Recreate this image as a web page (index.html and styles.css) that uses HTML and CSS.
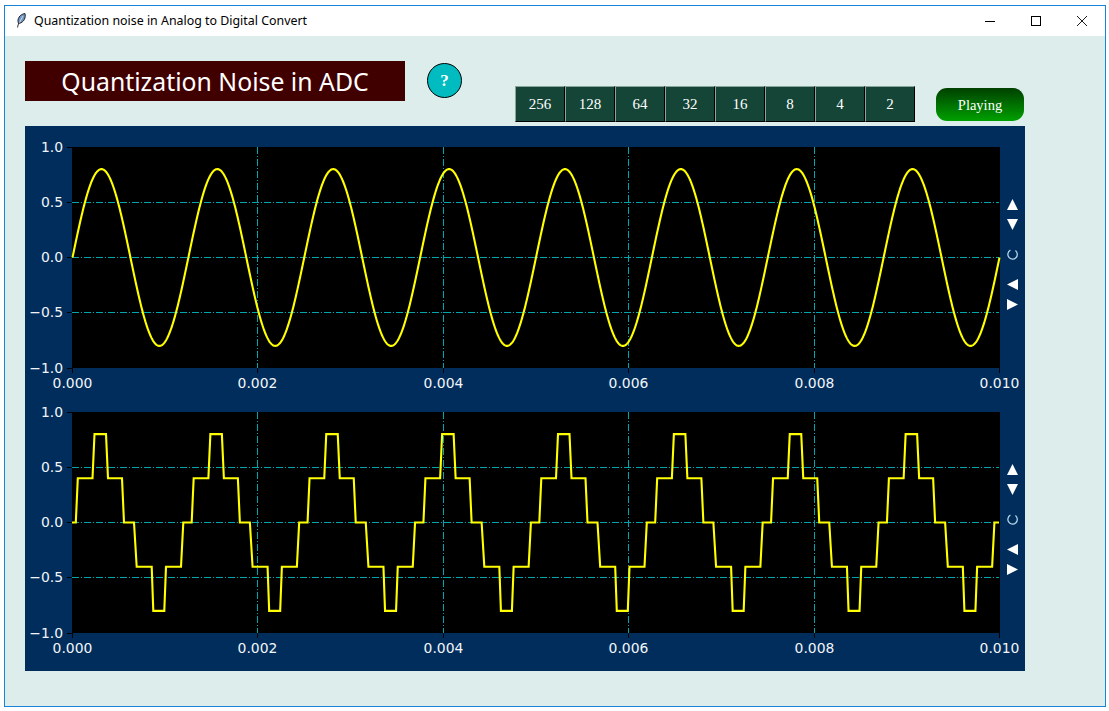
FILE: index.html
```html
<!DOCTYPE html>
<html>

<head>
    <title>Quantization noise in Analog to Digital Convert</title>
    <link rel="stylesheet" href="styles.css">
</head>

<body>
    <div class="window">
        <div class="titlebar">
            <svg class="feather" width="16" height="16" viewBox="0 0 16 16">
                <path d="M2.5 14.5L3.5 10.5M3.5 10.5C1.5 6 5 1 10 0.5C11 4 9.5 9.5 3.5 10.5Z" fill="#6f93c0" stroke="#000" stroke-width="0.8" />
                <path d="M4.5 9.5L8 3" stroke="#e6eef6" stroke-width="0.8" fill="none" />
            </svg>
            <span class="titlebar-text">Quantization noise in Analog to Digital Convert</span>
            <div class="win-buttons">
                <div class="win-btn">
                    <svg width="12" height="12" viewBox="0 0 12 12"><path d="M1 6.5H11" stroke="#000" fill="none" /></svg>
                </div>
                <div class="win-btn">
                    <svg width="12" height="12" viewBox="0 0 12 12"><rect x="1.5" y="1.5" width="9" height="9" stroke="#000" fill="none" /></svg>
                </div>
                <div class="win-btn">
                    <svg width="12" height="12" viewBox="0 0 12 12"><path d="M1 1L11 11M11 1L1 11" stroke="#000" fill="none" stroke-width="0.9" /></svg>
                </div>
            </div>
        </div>

        <div class="content">
            <div class="header">
                <div class="app-title">Quantization Noise in ADC</div>
                <div class="help">?</div>
                <div class="levels">
                    <div class="level">256</div>
                    <div class="level">128</div>
                    <div class="level">64</div>
                    <div class="level">32</div>
                    <div class="level">16</div>
                    <div class="level">8</div>
                    <div class="level">4</div>
                    <div class="level">2</div>
                </div>
                <div class="playing">Playing</div>
            </div>

            <div class="panel">
                <div class="plot">
                    <svg class="chart" id="chart-analog" width="975" height="221"></svg>
                    <div class="tools">
                        <svg class="tool" width="11" height="11" viewBox="0 0 11 11"><path d="M5.5 0L11 11H0Z" /></svg>
                        <svg class="tool" width="11" height="11" viewBox="0 0 11 11"><path d="M0 0H11L5.5 11Z" /></svg>
                        <svg class="tool tool-reload" width="11" height="11" viewBox="0 0 11 11"><path d="M3.4 1.2A4.7 4.7 0 1 0 8.4 1.6" /></svg>
                        <svg class="tool" width="11" height="11" viewBox="0 0 11 11"><path d="M11 0V11L0 5.5Z" /></svg>
                        <svg class="tool" width="11" height="11" viewBox="0 0 11 11"><path d="M0 0L11 5.5L0 11Z" /></svg>
                    </div>
                </div>
                <div class="plot">
                    <svg class="chart" id="chart-digital" width="975" height="221"></svg>
                    <div class="tools">
                        <svg class="tool" width="11" height="11" viewBox="0 0 11 11"><path d="M5.5 0L11 11H0Z" /></svg>
                        <svg class="tool" width="11" height="11" viewBox="0 0 11 11"><path d="M0 0H11L5.5 11Z" /></svg>
                        <svg class="tool tool-reload" width="11" height="11" viewBox="0 0 11 11"><path d="M3.4 1.2A4.7 4.7 0 1 0 8.4 1.6" /></svg>
                        <svg class="tool" width="11" height="11" viewBox="0 0 11 11"><path d="M11 0V11L0 5.5Z" /></svg>
                        <svg class="tool" width="11" height="11" viewBox="0 0 11 11"><path d="M0 0L11 5.5L0 11Z" /></svg>
                    </div>
                </div>
            </div>
        </div>
    </div>

    <script src="script.js"></script>
</body>

</html>
```

FILE: styles.css
```css
* {
    box-sizing: border-box;
}

html,
body {
    height: 100%;
}

body {
    margin: 0;
    padding: 5px 3px 4px 4px;
    background: #fff;
    overflow: hidden;
}

.window {
    display: flex;
    flex-direction: column;
    height: 702px;
    border: 1px solid #1883d7;
    background: #dcedec;
}

.titlebar {
    display: flex;
    align-items: center;
    height: 30px;
    flex-shrink: 0;
    padding-left: 10px;
    background: #fff;
}

.titlebar-text {
    margin: -2px 0 0 3px;
    font-family: "Noto Sans", sans-serif;
    font-size: 12.4px;
    color: #000;
}

.win-buttons {
    display: flex;
    margin-left: auto;
}

.win-btn {
    display: flex;
    align-items: center;
    justify-content: center;
    width: 46px;
    height: 30px;
}

.content {
    flex-grow: 1;
    padding: 25px 20px;
}

.header {
    display: flex;
    align-items: flex-start;
    height: 65px;
}

.app-title {
    width: 380px;
    height: 40px;
    background: #400000;
    color: #fff;
    font-family: "Noto Sans", sans-serif;
    font-size: 24.8px;
    line-height: 40px;
    text-align: center;
}

.help {
    width: 35px;
    height: 35px;
    margin: 2px 0 0 22px;
    border: 1px solid #000;
    border-radius: 50%;
    background: #00bcc0;
    color: #fff;
    font-family: "Liberation Serif", serif;
    font-size: 17px;
    font-weight: bold;
    line-height: 34px;
    text-align: center;
}

.levels {
    display: flex;
    margin: 25px 0 0 53px;
}

.level {
    width: 50px;
    height: 36px;
    border: 1px solid;
    border-color: #8aa59c #000 #000 #8aa59c;
    background: #144536;
    color: #fff;
    font-family: "Liberation Serif", serif;
    font-size: 15px;
    line-height: 34px;
    text-align: center;
}

.playing {
    width: 88px;
    height: 33px;
    margin: 27px 0 0 21px;
    border-radius: 11px;
    background: linear-gradient(#004000, #00a000);
    color: #fff;
    font-family: "Liberation Serif", serif;
    font-size: 14.5px;
    line-height: 34px;
    text-align: center;
}

.panel {
    width: 1000px;
    height: 545px;
    padding-top: 21px;
    background: #002d5c;
}

.plot {
    display: flex;
    height: 221px;
    margin-bottom: 44px;
}

.chart {
    flex-shrink: 0;
    overflow: visible;
}

.axes {
    fill: #000;
}

.grid {
    stroke: #00a5ad;
    stroke-width: 1;
    stroke-dasharray: 7 2 1 2;
}

.tick {
    stroke: #000;
    stroke-width: 1;
}

.tick-label {
    fill: #f2f5f8;
    font-family: "DejaVu Sans", sans-serif;
    font-size: 13.9px;
}

.signal {
    fill: none;
    stroke: #ff0;
    stroke-width: 2.1;
}

.tools {
    display: flex;
    flex-direction: column;
    gap: 9px;
    padding: 52px 0 0 7px;
}

.tool {
    flex-shrink: 0;
    fill: #fff;
}

.tool-reload {
    margin: 10px 0;
    fill: none;
    stroke: #b5d6e8;
    stroke-width: 1.3;
}
```

FILE: script.js
```js
const SVG_NS = "http://www.w3.org/2000/svg"
const AXES_LEFT = 47
const AXES_W = 927
const AXES_H = 221
const PX_PER_SEC = AXES_W / 0.01
const PERIOD = 0.00125 * PX_PER_SEC

function add(svg, tag, attrs, text) {
    const el = document.createElementNS(SVG_NS, tag)
    for (const key in attrs) {
        el.setAttribute(key, attrs[key])
    }
    if (text) {
        el.textContent = text
    }
    svg.appendChild(el)
    return el
}

function toY(v) {
    return AXES_H / 2 - v * AXES_H / 2
}

function drawAxes(svg) {
    add(svg, "rect", { class: "axes", x: AXES_LEFT, y: 0, width: AXES_W + 1, height: AXES_H })

    const xTicks = ["0.000", "0.002", "0.004", "0.006", "0.008", "0.010"]
    xTicks.forEach((label, i) => {
        const x = Math.round(AXES_LEFT + i * AXES_W / 5) + 0.5
        if (i > 0 && i < 5) {
            add(svg, "line", { class: "grid", x1: x, x2: x, y1: 0, y2: AXES_H })
        }
        add(svg, "line", { class: "tick", x1: x, x2: x, y1: AXES_H, y2: AXES_H + 5 })
        add(svg, "text", { class: "tick-label", x: x, y: AXES_H + 20, "text-anchor": "middle" }, label)
    })

    const yTicks = [["1.0", 1], ["0.5", 0.5], ["0.0", 0], ["\u22120.5", -0.5], ["\u22121.0", -1]]
    yTicks.forEach(([label, v]) => {
        const y = Math.floor(toY(v)) + 0.5
        if (v > -1 && v < 1) {
            add(svg, "line", { class: "grid", x1: AXES_LEFT, x2: AXES_LEFT + AXES_W, y1: y, y2: y })
        }
        add(svg, "line", { class: "tick", x1: AXES_LEFT - 5, x2: AXES_LEFT, y1: y, y2: y })
        add(svg, "text", { class: "tick-label", x: AXES_LEFT - 9, y: y + 4.5, "text-anchor": "end" }, label)
    })
}

function sinePoints() {
    const pts = []
    for (let x = 0; x <= AXES_W; x += 0.5) {
        const v = 0.8 * Math.sin(2 * Math.PI * x / PERIOD)
        pts.push(`${AXES_LEFT + 0.5 + x},${toY(v)}`)
    }
    return pts.join(" ")
}

// corners of one cycle, read off the stepped trace: [px from cycle start, level]
const STEPS = [
    [3.8, 0], [5.8, 0.4], [20.5, 0.4], [22.5, 0.8], [34, 0.8], [36, 0.4], [50, 0.4], [52, 0],
    [62, 0], [64.7, -0.4], [79.7, -0.4], [81.3, -0.8], [92.3, -0.8], [94, -0.4], [109, -0.4], [111.3, 0]
]

function stepPoints() {
    const pts = [`${AXES_LEFT},${toY(0)}`]
    for (let k = 0; k < 8; k++) {
        STEPS.forEach(([dx, v]) => {
            pts.push(`${AXES_LEFT + k * PERIOD + dx},${toY(v)}`)
        })
    }
    pts.push(`${AXES_LEFT + AXES_W},${toY(0)}`)
    return pts.join(" ")
}

const analog = document.getElementById("chart-analog")
const digital = document.getElementById("chart-digital")

drawAxes(analog)
add(analog, "polyline", { class: "signal", points: sinePoints() })

drawAxes(digital)
add(digital, "polyline", { class: "signal", points: stepPoints() })
```
